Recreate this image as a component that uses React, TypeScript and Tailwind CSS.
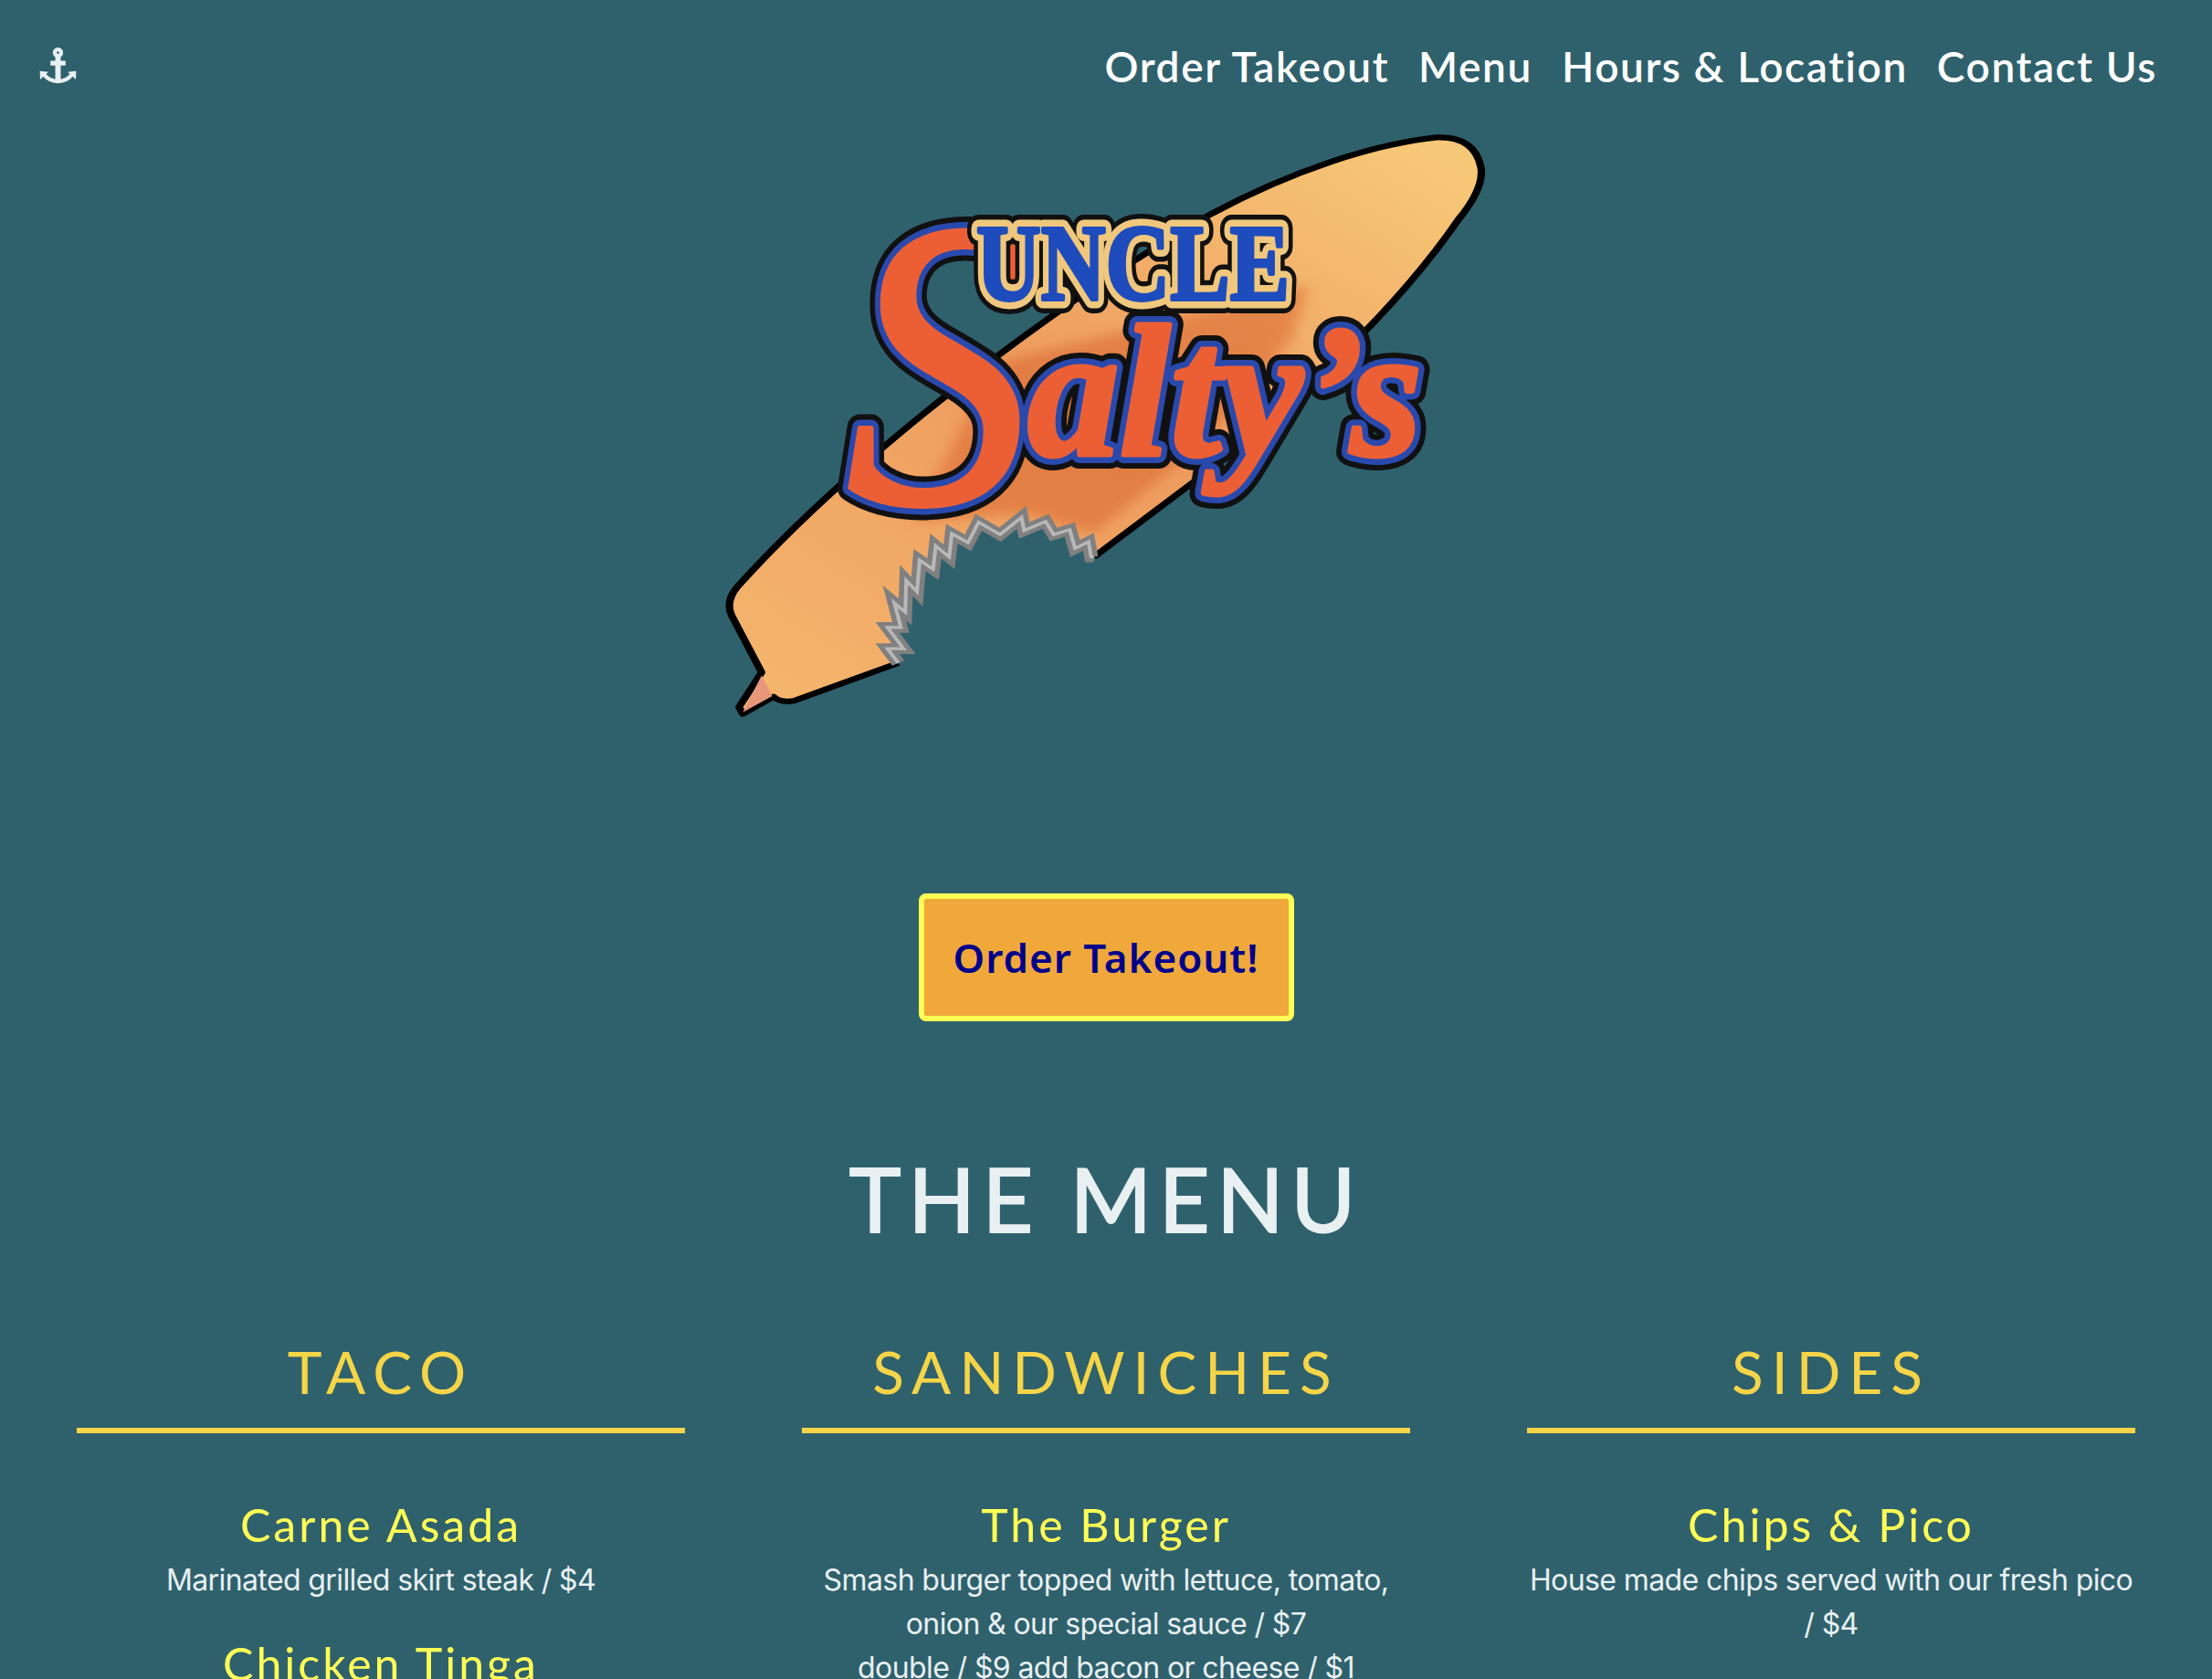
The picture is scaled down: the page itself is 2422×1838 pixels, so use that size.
const columns = [
  { title: "TACO", items: [
    { name: "Carne Asada", lines: ["Marinated grilled skirt steak / $4"] },
    { name: "Chicken Tinga", lines: ["Shredded chicken in chipotle sauce / $4"] },
  ]},
  { title: "SANDWICHES", items: [
    { name: "The Burger", lines: ["Smash burger topped with lettuce, tomato,", "onion & our special sauce / $7", "double / $9 add bacon or cheese / $1"] },
  ]},
  { title: "SIDES", items: [
    { name: "Chips & Pico", lines: ["House made chips served with our fresh pico", "/ $4"] },
  ]},
];

function Anchor() {
  return (
    <svg viewBox="130 155 124 125" className="w-[41px] h-[42px]" fill="#e8f0f2">
      <path fillRule="evenodd" d="M192 157a17 17 0 1 1-.01 0zM192 170a4 4 0 1 0 .01 0z" />
      <rect x="183" y="188" width="18" height="80" />
      <rect x="167" y="201" width="50" height="16" rx="2" />
      <path d="M146 247c12 15 28 22 46 22s34-7 46-22" fill="none" stroke="#e8f0f2" strokeWidth="13" />
      <path d="M132 235l28 3-27 25zM252 235l-28 3 27 25z" />
    </svg>
  );
}

const bite = "L775 1097 L770 1060 L745 1076 L735 1030 L705 1042 L690 1010 L650 1032 L645 1000 L605 1042 L565 1012 L545 1062 L515 1040 L510 1097 L485 1070 L480 1127 L455 1105 L450 1182 L430 1155 L428 1232 L408 1210 L420 1270 L395 1270 L425 1322 L395 1322 L415 1357";
const outer = "L220 1450 Q195 1455 182 1440 L125 1482 L118 1465 L160 1380 L104 1240 Q92 1205 115 1170 C300 900 650 520 1000 255 C1150 150 1300 85 1420 68 Q1490 65 1502 140 Q1510 190 1460 270 C1350 480 1180 690 1010 870 L780 1097";

function Logo() {
  return (
    <svg viewBox="11 24 920 676" className="w-[920px] h-[676px]">
      <defs>
        <linearGradient id="b" x1="0.1" y1="1" x2="0.9" y2="0">
          <stop offset="0" stopColor="#f4b56c" />
          <stop offset="0.5" stopColor="#ee9c5f" />
          <stop offset="1" stopColor="#f7c877" />
        </linearGradient>
        <filter id="s" x="-20%" y="-20%" width="140%" height="140%">
          <feGaussianBlur stdDeviation="14" />
        </filter>
      </defs>
      <g transform="scale(0.5868 0.4464)">
        <path d={"M415 1357 " + outer + " " + bite.replace(/^L775 1097 /, "") + " Z"} fill="url(#b)" />
        <path d="M600 620 L1180 430 L1150 560 L1000 800 L780 1040 L650 990 L440 1010 Z" fill="#d9652f" opacity="0.55" filter="url(#s)" />
        <path d={"M415 1357 " + outer} fill="none" stroke="#000" strokeWidth="14" strokeLinejoin="round" />
        <path d="M125 1478 L160 1388 L180 1438 Z" fill="#e8977a" />
        <path d={"M780 1097 " + bite} fill="none" stroke="#808080" strokeWidth="26" strokeLinejoin="miter" />
        <path d={"M780 1097 " + bite} fill="none" stroke="#b8b8b8" strokeWidth="7" strokeLinejoin="miter" />
      </g>
      <g fontFamily="'Liberation Serif', serif" fontWeight="700">
        <g fontStyle="italic">
          {([["#111", 30], ["#2a49ad", 18], ["#ec5f35", 5]] as [string, number][]).map(([c, w]) => (
            <g key={c} fill={c} stroke={c} strokeWidth={w} strokeLinejoin="round">
              <text x="186" y="430" fontSize="450" fontWeight="400" textLength="205" lengthAdjust="spacingAndGlyphs">S</text>
              <text x="385" y="378" fontSize="205" textLength="432" lengthAdjust="spacingAndGlyphs">alty’s</text>
            </g>
          ))}
        </g>
        <g fontSize="118">
          <text x="329" y="208" textLength="343" lengthAdjust="spacingAndGlyphs" fill="#111" stroke="#111" strokeWidth="30" strokeLinejoin="round">UNCLE</text>
          <text x="329" y="208" textLength="343" lengthAdjust="spacingAndGlyphs" fill="#efc77d" stroke="#efc77d" strokeWidth="19" strokeLinejoin="round">UNCLE</text>
          <text x="329" y="208" textLength="343" lengthAdjust="spacingAndGlyphs" fill="#1f4cbc" stroke="#1f4cbc" strokeWidth="4" strokeLinejoin="round">UNCLE</text>
        </g>
      </g>
    </svg>
  );
}

export default function App() {
  return (
    <div className="h-[1838px] overflow-hidden bg-[#2f616d] font-['Inter',sans-serif] text-[#e8f0f2]">
      <nav className="flex h-[144px] items-center justify-between pl-[43px] pr-[60px]">
        <Anchor />
        <ul className="flex gap-[32px] font-['Lato',sans-serif] text-[46px] font-semibold tracking-[1.6px] text-white">
          <li>Order Takeout</li>
          <li>Menu</li>
          <li>Hours &amp; Location</li>
          <li>Contact Us</li>
        </ul>
      </nav>
      <div className="flex flex-col items-center">
        <Logo />
        <a className="mt-[158px] flex h-[140px] w-[411px] items-center justify-center rounded-[8px] border-[6px] border-[#ffff55] bg-[#f0a83a] font-['Noto_Sans',sans-serif] text-[44px] font-semibold tracking-[1px] text-[#00008b]">
          Order Takeout!
        </a>
        <h1 className="mt-[144px] font-['Lato',sans-serif] text-[96px] leading-[100px] tracking-[8px] [-webkit-text-stroke:2px_#e8f0f2]">
          THE MENU
        </h1>
      </div>
      <div className="mt-[100px] grid grid-cols-3 gap-[128px] px-[84px] text-center">
        {columns.map((c) => (
          <section key={c.title}>
            <h2 className="h-[107px] border-b-[6px] border-[#f5d547] font-['Lato',sans-serif] text-[64px] font-normal leading-[80px] tracking-[9px] text-[#f5d547]">
              {c.title}
            </h2>
            <div className="mt-[70px] flex flex-col gap-[37px]">
              {c.items.map((it) => (
                <article key={it.name}>
                  <h3 className="font-['Lato',sans-serif] text-[50px] leading-[60px] tracking-[3px] text-[#ffff55]">{it.name}</h3>
                  <p className="mt-[7px] text-[32px] leading-[48px] tracking-[-0.6px]">
                    {it.lines.map((l) => (
                      <span key={l} className="block">{l}</span>
                    ))}
                  </p>
                </article>
              ))}
            </div>
          </section>
        ))}
      </div>
    </div>
  );
}
